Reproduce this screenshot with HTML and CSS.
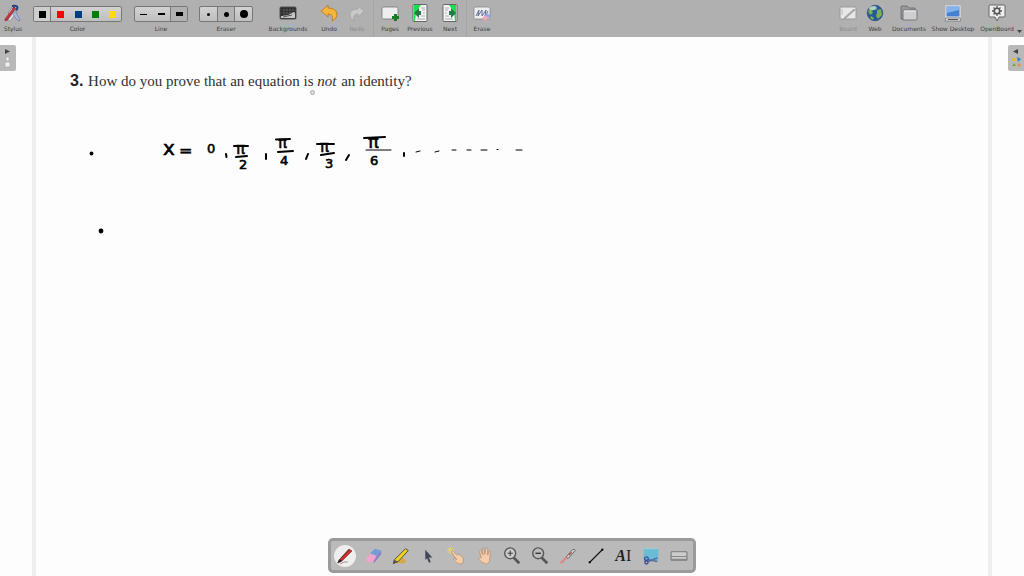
FILE: index.html
```html
<!DOCTYPE html>
<html lang="en">
<head>
<meta charset="utf-8">
<meta name="viewport" content="width=device-width, initial-scale=1">
<title>OpenBoard</title>
<link rel="stylesheet" href="styles.css">
</head>
<body>
<div class="app">
<header class="toolbar">
  <div class="tools">
    <button class="tool stylus" type="button">
      <svg class="icon" viewBox="0 0 20 20"><path d="M5 10 10 3l2 1-4 8z" fill="#e8ecf4" stroke="#606878" stroke-width=".7"/><path d="M9 3q7-1 5 3t-5 4M11 4l-3 9" fill="none" stroke="#203f82" stroke-width="2"/><path d="m2 16 9-12 2 2L5 17l-3 1z" fill="#c43434" stroke="#8d2b37" stroke-width=".5"/><path d="m5 17 7-10 2 1-7 10z" fill="#e6e9f2" stroke="#65708d" stroke-width=".5"/><path d="m10 11 4 6 3 1-1-3-4-7z" fill="#a9bad8" stroke="#64799a" stroke-width=".6"/></svg>
      <span>Stylus</span>
    </button>
    <div class="group colors" role="group" aria-label="Color">
      <div class="segments">
        <button class="seg on" type="button" aria-label="Black"><i class="swatch black"></i></button>
        <button class="seg" type="button" aria-label="Red"><i class="swatch red"></i></button>
        <button class="seg" type="button" aria-label="Blue"><i class="swatch blue"></i></button>
        <button class="seg" type="button" aria-label="Green"><i class="swatch green"></i></button>
        <button class="seg" type="button" aria-label="Yellow"><i class="swatch yellow"></i></button>
      </div>
      <span>Color</span>
    </div>
    <div class="group lines" role="group" aria-label="Line">
      <div class="segments">
        <button class="seg" type="button" aria-label="Fine line"><i class="line thin"></i></button>
        <button class="seg" type="button" aria-label="Medium line"><i class="line mid"></i></button>
        <button class="seg on-right" type="button" aria-label="Strong line"><i class="line thick"></i></button>
      </div>
      <span>Line</span>
    </div>
    <div class="group" role="group" aria-label="Eraser">
      <div class="segments">
        <button class="seg" type="button" aria-label="Small eraser"><i class="dot small"></i></button>
        <button class="seg on-mid" type="button" aria-label="Medium eraser"><i class="dot medium"></i></button>
        <button class="seg" type="button" aria-label="Large eraser"><i class="dot large"></i></button>
      </div>
      <span>Eraser</span>
    </div>
    <button class="tool backgrounds" type="button">
      <svg class="icon" viewBox="0 0 20 20"><rect x="2" y="4" width="16" height="12" rx="1" fill="#282828" stroke="#555"/><path d="M3 7h14M3 10h14M6 5v7M9 5v7M12 5v7M15 5v7" stroke="#777" stroke-width=".5"/><path d="M3 15v-2l7-1 6-3 1 1v5z" fill="#c5c5c5"/><path d="m5 14 9-2" stroke="#555"/></svg>
      <span>Backgrounds</span>
    </button>
    <div class="cluster ruled">
      <button class="tool" type="button">
        <svg class="icon" viewBox="0 0 20 20"><path d="m2 8 7-6v3q9 0 9 7 0 4-5 6 2-7-4-7v3z" fill="#f3b63b" stroke="#b9751b" stroke-width=".8"/></svg>
        <span>Undo</span>
      </button>
      <button class="tool" type="button" disabled>
        <svg class="icon" viewBox="0 0 20 20"><path d="m17 8-6-5v3q-8 0-8 6 0 4 4 6-2-7 4-7v3z" fill="#c9c9c9" stroke="#a2a2a2" stroke-width=".8"/></svg>
        <span>Redo</span>
      </button>
    </div>
    <div class="cluster pages">
      <button class="tool" type="button">
        <svg class="icon" viewBox="0 0 20 20"><rect x="2" y="4" width="16" height="12" rx="1.5" fill="#eee" stroke="#777" stroke-width=".8"/><path d="M15.500 11v7M12 14.500h7" stroke="#197c24" stroke-width="3"/></svg>
        <span>Pages</span>
      </button>
      <button class="tool" type="button">
        <svg class="icon" viewBox="0 0 20 20"><rect x="3" y="1.500" width="14" height="17" rx="1" fill="#f4f4f4" stroke="#666"/><path d="M4 2h7L6 9l-1 9H4z" fill="#16e24a"/><path d="m4 10 5-5v3h2v4H9v3z" fill="#237c45"/><path d="M11 5h4M12 7h3M13 10h2M11 13h4M7 16h8" stroke="#999" stroke-width=".8"/></svg>
        <span>Previous</span>
      </button>
      <button class="tool" type="button">
        <svg class="icon" viewBox="0 0 20 20"><rect x="3" y="1.500" width="14" height="17" rx="1" fill="#f4f4f4" stroke="#666"/><path d="M16 2H9l5 7 1 9h1z" fill="#16e24a"/><path d="m16 10-5-5v3H9v4h2v3z" fill="#237c45"/><path d="M9 5H5M8 7H5M7 10H5M9 13H5M13 16H5" stroke="#999" stroke-width=".8"/></svg>
        <span>Next</span>
      </button>
    </div>
    <button class="tool erase" type="button">
      <svg class="icon" viewBox="0 0 20 20"><rect x="2" y="4" width="16" height="12" rx="1.500" fill="#eee" stroke="#888" stroke-width=".8"/><path d="m4 13 3-6-1 6 4-6v6l4-6-1 6 3-5" fill="none" stroke="#52618f" stroke-width=".9"/><path d="m10 15 5-4 3 3-5 4z" fill="#f2a4b8"/><path d="m13 12 2-2 4 3-2 2z" fill="#91a7e8"/></svg>
      <span>Erase</span>
    </button>
  </div>
  <nav class="modes" aria-label="Modes">
    <button class="tool board" type="button" disabled>
      <svg class="icon" viewBox="0 0 20 20"><rect x="2" y="4" width="16" height="12" rx="1" fill="#e7e7e7" stroke="#999"/><path d="m7 14 9-8 1 1-9 8-2 1z" fill="#aaa" stroke="#888" stroke-width=".5"/><path d="M4 6v6" stroke="#bbb"/></svg>
      <span>Board</span>
    </button>
    <button class="tool web" type="button">
      <svg class="icon" viewBox="0 0 20 20"><circle cx="10" cy="10" r="7.800" fill="#245a9c" stroke="#26456e" stroke-width=".6"/><path d="m3 8 3-4 5-1-1 3-3 2 1 2-3 2zM12 7l4-1 1 6-4 4-2-3 1-3zM6 13l3 2-1 2-3-2z" fill="#7cae55"/><ellipse cx="8" cy="5" rx="4" ry="2" fill="#d8ecff" opacity=".6"/></svg>
      <span>Web</span>
    </button>
    <button class="tool documents" type="button">
      <svg class="icon" viewBox="0 0 20 20"><path d="M2 16V4q0-1 1-1h5l2 2h6v11z" fill="#999" stroke="#666" stroke-width=".8"/><path d="M4 8q0-1 1-1h12q1 0 1 1v8q0 1-1 1H4z" fill="#cdcdd2" stroke="#666" stroke-width=".8"/><path d="M5 8h12" stroke="#f0f0f0"/></svg>
      <span>Documents</span>
    </button>
    <button class="tool desktop" type="button">
      <svg class="icon" viewBox="0 0 20 20"><rect x="3" y="3" width="14" height="11" fill="#4480cf" stroke="#e7edf5"/><path d="M4 4h12v3L4 10z" fill="#83b3e9"/><path d="M3 15h14l1 3H2z" fill="#ddd" stroke="#666" stroke-width=".6"/><path d="M5 16.500h10" stroke="#555"/></svg>
      <span>Show Desktop</span>
    </button>
    <button class="tool openboard" type="button">
      <svg class="icon" viewBox="0 0 20 20"><path d="M3 2h14q1 0 1 1v10q0 1-1 1h-5l-2 4-2-4H3q-1 0-1-1V3q0-1 1-1z" fill="#eee" stroke="#666"/><circle cx="10" cy="8" r="2.700" fill="none" stroke="#555" stroke-width="1.600"/><path d="M10 3v2M10 11v2M5 8h2M13 8h2M6.500 4.500l1.500 1.500M12 10l1.500 1.500M13.500 4.500 12 6M8 10l-1.500 1.500" stroke="#555" stroke-width="1.300"/></svg>
      <span>OpenBoard</span>
    </button>
    <svg class="caret" viewBox="0 0 5 4"><path d="M0 1h5L2.500 4z" fill="#444"/></svg>
  </nav>
</header>
<main class="board-area">
  <section class="paper">
    <h1 class="question"><b>3.</b> How do you prove that an equation is <em>not</em> an identity?</h1>
    <svg class="ink" viewBox="0 0 490 120" role="img" aria-label="Handwritten notes">
      <g class="symbols">
        <text class="letter" x="103" y="30">x</text><text x="119" y="31">=</text><text class="zero" x="147" y="28">0</text>
        <text class="pi" x="176" y="29">π</text><text class="number" x="179" y="44">2</text>
        <text class="pi" x="218" y="23">π</text><text class="number" x="220" y="40">4</text>
        <text class="pi" x="260" y="27">π</text><text class="number" x="265" y="43">3</text>
        <text class="pi big" x="308" y="23">π</text><text class="number" x="310" y="40">6</text>
      </g>
      <path class="stroke" d="M174 21h14M176 32l11-1M216 14.500l14-.5M218 27l15-1M257 19h17M261 30l13-2M304 13l21-1"/>
      <path class="bar" d="M306 25h25"/>
      <path class="stroke" d="m166 29 .5 3M206 29v5M248 29l-2 5M289 30l-3 5M344 28v3"/>
      <path class="dash" d="m356 27 4-1M375 27l4-1M392 25h4M407 25h4M421 25h6M437 24.500h1M456 25h6"/>
      <circle cx="31.500" cy="28.500" r="1.900"/><circle cx="41" cy="106" r="2.400"/>
    </svg>
  </section>
  <span class="pointer" aria-hidden="true"></span>
  <button class="side left" type="button" aria-label="Open page panel">
    <svg viewBox="0 0 16 26"><path d="m5 4 5 2.500L5 9z" fill="#444"/><path d="M6 12h3v4H6zM5 17h5v5H5z" fill="#eee" stroke="#999" stroke-width=".5"/></svg>
  </button>
  <button class="side right" type="button" aria-label="Open library panel">
    <svg viewBox="0 0 16 26"><path d="M10 4 5 6.500 10 9z" fill="#444"/><path d="M4 13h4v3H4z" fill="#e7b82b"/><path d="m9 12 4 2-3 3z" fill="#2c83bd"/><path d="m4 21 2-3 2 3z" fill="#75a83c"/><circle cx="11" cy="20" r="1.800" fill="#e69150"/></svg>
  </button>
  <div class="palette" role="toolbar" aria-label="Board tools">
    <button type="button" aria-label="Pen" class="active"><svg viewBox="0 0 22 22"><path d="m5 15 10-11 3 2-10 10-4 2z" fill="#d52e2e" stroke="#6d2222" stroke-width=".6"/><path d="m3 18 3-4 2 2z" fill="#222"/><path d="m7 13 8-8" stroke="#333" stroke-width=".8"/><path d="M6 19q4-3 8-2" fill="none" stroke="#777" stroke-width=".7"/></svg></button>
    <button type="button" aria-label="Eraser"><svg viewBox="0 0 22 22"><path d="m3 15 5-7 7 3-4 7-7-1z" fill="#f2a4cb"/><path d="m8 8 5-5 7 2-5 6z" fill="#719ed9"/><path d="m11 18 4-7 5-6v4l-7 9z" fill="#8e80c4"/></svg></button>
    <button type="button" aria-label="Highlighter"><svg viewBox="0 0 22 22"><path d="m8 17 5-4 4 3-2 3H4z" fill="#d6a848"/><path d="m4 15 12-12 3 2L8 17l-5 2z" fill="#eed321" stroke="#4b4520"/><path d="m3 15 5 2-6 3z" fill="#555"/></svg></button>
    <button type="button" aria-label="Select"><svg viewBox="0 0 22 22"><path d="m8 4 8 9-4-.5 2 5-2 1-2-5-2 2z" fill="#3f4758"/></svg></button>
    <button type="button" aria-label="Interact"><svg viewBox="0 0 22 22"><path d="M5 1v8M1 5h8M2 2l6 6M2 8l6-6" stroke="#ead76b"/><path d="M6 7q-1-2 1-2l5 5 2-1 5 4v5l-3 2q-5-1-8-6 1-1 4 1z" fill="#f4ccaa" stroke="#a87b5d" stroke-width=".6"/></svg></button>
    <button type="button" aria-label="Scroll page"><svg viewBox="0 0 22 22"><path d="M8 13 6 6q1-2 2 0l2 4-1-7q1-1 2 0l1 6 1-7q2-1 2 1v7l2-5q2 0 1 2l-1 10-3 3q-6-1-9-6 0-2 3-1z" fill="#f4ccaa" stroke="#a87b5d" stroke-width=".6"/></svg></button>
    <button type="button" aria-label="Zoom in"><svg viewBox="0 0 22 22"><path d="m12 12 7 7" stroke="#555" stroke-width="3"/><circle cx="9" cy="8" r="6" fill="#ccc" stroke="#555" stroke-width="1.500"/><path d="M9 5v6M6 8h6" stroke="#444" stroke-width="1.300"/></svg></button>
    <button type="button" aria-label="Zoom out"><svg viewBox="0 0 22 22"><path d="m12 12 7 7" stroke="#555" stroke-width="3"/><circle cx="9" cy="8" r="6" fill="#bbb" stroke="#555" stroke-width="1.500"/><path d="M6 8h6" stroke="#333" stroke-width="1.500"/></svg></button>
    <button type="button" aria-label="Laser pointer"><svg viewBox="0 0 22 22"><path d="m3 19 7-7" stroke="#df8585" stroke-width="2.500"/><path d="m9 12 7-8q3-1 3 1l-8 9z" fill="#ccc" stroke="#666"/><path d="m12 10 3-3" stroke="#a44" stroke-width="1.500"/></svg></button>
    <button type="button" aria-label="Draw line"><svg viewBox="0 0 22 22"><path d="M4 18 18 4" stroke="#111" stroke-width="1.500"/><circle cx="4" cy="18" r="1.200"/><circle cx="18" cy="4" r="1.200"/></svg></button>
    <button type="button" aria-label="Write text"><span class="text-icon"><em>A</em>I</span></button>
    <button type="button" aria-label="Capture part of screen"><svg viewBox="0 0 22 22"><path d="M3 3h16v13H3z" fill="#6bbbd5"/><path d="M3 3h16" stroke="#a5ddec" stroke-dasharray="2 1"/><path d="m8 15 10 2M8 17l10-4" stroke="#536d99" stroke-width="1.600"/><circle cx="6" cy="14" r="2" fill="none" stroke="#3c529a" stroke-width="1.500"/><circle cx="6" cy="18" r="1.800" fill="none" stroke="#3c529a" stroke-width="1.500"/></svg></button>
    <button type="button" aria-label="Virtual keyboard"><svg viewBox="0 0 22 22"><rect x="2" y="6" width="18" height="10" rx="1" fill="#888" stroke="#777" stroke-width=".6"/><path d="M3 7h16v4H3zM3 12h16v2H3z" fill="#ccc"/></svg></button>
  </div>
</main>
</div>
</body>
</html>
```
FILE: styles.css
```css
* { box-sizing: border-box; }
body { margin: 0; font-family: "DejaVu Sans", sans-serif; background: #fdfdfd; }
button { appearance: none; border: 0; padding: 0; background: none; font: inherit; color: inherit; }
svg { display: block; }
.app { min-height: 100vh; display: flex; flex-direction: column; }
.toolbar { display: flex; justify-content: space-between; height: 37px; background: #b0b0b0; color: #404040; font-size: 6px; line-height: 8px; white-space: nowrap; }
.tools, .modes, .cluster { display: flex; }
.tool, .group { display: flex; flex-direction: column; align-items: center; height: 37px; padding-top: 3px; }
.tool { width: 30px; flex: none; }
.tool:disabled { color: #8c8c8c; }
.icon { width: 20px; height: 20px; margin-bottom: 2px; }
.stylus { width: 26px; margin-right: 7px; }
.group { margin-right: 12px; }
.lines { margin-right: 11px; }
.segments { display: flex; height: 16px; margin: 3px 0; border: 1px solid #777; border-radius: 2px; background: linear-gradient(#d2d2d2, #bfbfbf); }
.seg { display: grid; place-items: center; width: 18px; }
.seg:first-child, .seg:last-child { width: 17px; }
.colors .seg:nth-child(4) { width: 17px; }
.on { border-right: 1px solid #777; background: #cdcdcd; }
.on-right { border-left: 1px solid #777; background: #b0b0b0; }
.on-mid { border: 1px solid #777; border-width: 0 1px; background: #b4b4b4; }
.swatch { width: 7px; height: 7px; }
.black { background: #000; }
.red { background: #f00; }
.blue { background: #004080; }
.green { background: #008000; }
.yellow { background: #ffdc00; }
.line { width: 7px; background: #000; }
.thin { height: 1px; }
.mid { height: 2px; }
.thick { height: 4px; }
.dot { border-radius: 50%; background: #000; }
.small { width: 3px; height: 3px; }
.medium { width: 5px; height: 5px; }
.large { width: 8px; height: 8px; }
.backgrounds { width: 46px; margin-right: 4px; }
.ruled { padding-right: 2px; border-right: 1px solid #a6a6a6; }
.ruled .tool { width: 28px; }
.pages { padding: 0 1px; border-right: 1px solid #a6a6a6; }
.board { width: 26px; }
.web { width: 28px; }
.documents { width: 40px; }
.desktop { width: 48px; }
.openboard { width: 40px; }
.caret { width: 5px; height: 4px; margin: 29px 2px 0 0; }
.board-area { position: relative; flex: 1; display: flex; }
.paper { flex: 1; margin: 0 32px; padding: 34px 24px 0 34px; border: solid #eee; border-width: 0 4px; }
.question { margin: 0; color: #303030; font: 15px/20px "Liberation Serif", serif; }
.question b { margin-right: 1px; font: bold 16px/20px "Liberation Sans", sans-serif; color: #222; }
.question em { margin-right: 1px; }
.ink { width: 490px; max-width: 100%; margin: 34px 0 0 -10px; }
.symbols { font: 16px "DejaVu Sans", sans-serif; stroke: #000; stroke-width: 0.6; }
.letter { font-size: 20px; }
.zero { font-size: 13px; }
.pi { font-size: 15px; }
.big { font-size: 18px; }
.number { font-size: 13px; }
.stroke, .bar, .dash { fill: none; stroke: #000; stroke-width: 2; stroke-linecap: round; }
.bar, .dash { stroke-width: 1; }
.pointer { position: absolute; left: 310px; top: 53px; width: 5px; height: 5px; border: 1px solid #aaa; border-radius: 50%; background: #ddd; }
.side { position: absolute; top: 8px; width: 16px; height: 26px; background: #b9b9b9; }
.left { left: 0; border-radius: 0 2px 2px 0; }
.right { right: 0; border-radius: 2px 0 0 2px; }
.palette { position: absolute; bottom: 3px; left: 50%; transform: translateX(-50%); display: flex; width: 368px; height: 35px; border: 3px solid #9b9b9b; border-radius: 5px; background: #bababa; }
.palette button { flex: 1; display: grid; place-items: center; }
.palette svg, .text-icon { width: 20px; height: 20px; }
.palette .active svg { width: 22px; height: 22px; border-radius: 50%; background: #eee; }
.text-icon { color: #222; font: 16px/20px "Liberation Serif", serif; }
.text-icon em { font-weight: bold; }
```
